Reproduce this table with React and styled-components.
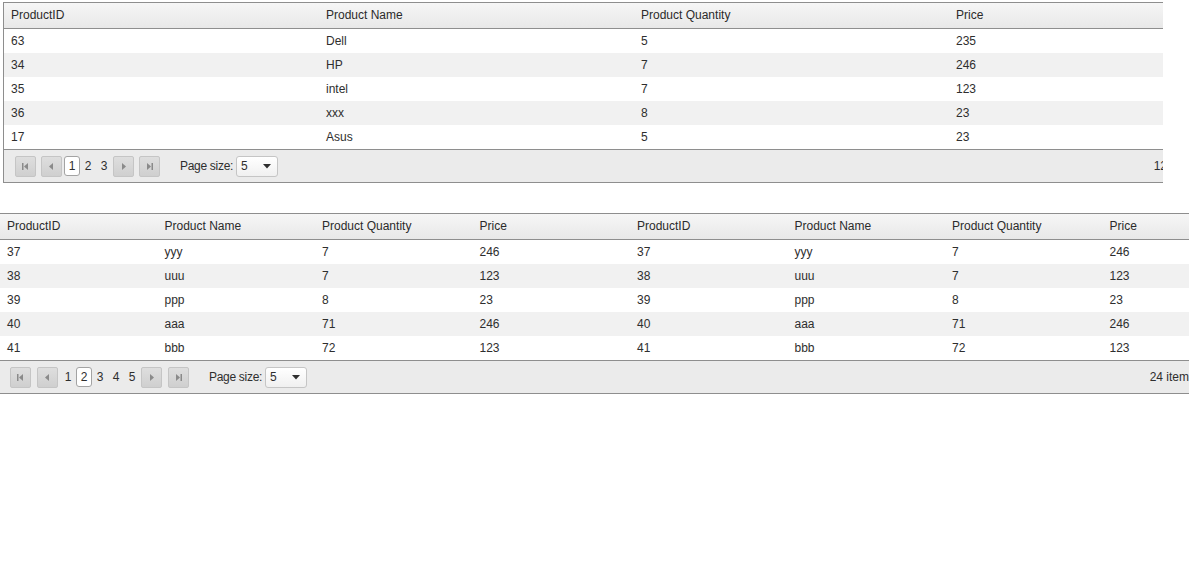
import React from "react";
import styled, { createGlobalStyle } from "styled-components";

const GlobalStyle = createGlobalStyle`
  html, body {
    margin: 0;
    padding: 0;
    background: #fff;
    overflow: hidden;
  }
  body {
    font-family: "Liberation Sans", Arial, sans-serif;
    font-size: 12px;
    color: #2e2e2e;
  }
`;

const firstRows = [
  ["63", "Dell", "5", "235"],
  ["34", "HP", "7", "246"],
  ["35", "intel", "7", "123"],
  ["36", "xxx", "8", "23"],
  ["17", "Asus", "5", "23"],
];

const secondRows = [
  ["37", "yyy", "7", "246"],
  ["38", "uuu", "7", "123"],
  ["39", "ppp", "8", "23"],
  ["40", "aaa", "71", "246"],
  ["41", "bbb", "72", "123"],
];

const columns = ["ProductID", "Product Name", "Product Quantity", "Price"];

const Page = styled.div`
  width: 1189px;
  height: 570px;
  overflow: hidden;
  padding-top: 2px;
  box-sizing: border-box;
`;

const Clip = styled.div`
  width: ${(p) => p.width}px;
  margin-left: ${(p) => p.left}px;
  margin-bottom: ${(p) => p.bottom || 0}px;
  overflow: hidden;
`;

const Grid = styled.div`
  width: ${(p) => p.width}px;
  border: 1px solid #8e8e8e;
  border-right: none;
  overflow: hidden;
  background: #fff;
`;

const Table = styled.div`
  width: 1260px;
  display: grid;
  grid-template-columns: repeat(${(p) => p.cols}, 1fr);
`;

const HeadCell = styled.div`
  height: 25px;
  line-height: 25px;
  padding: 0 7px;
  background: linear-gradient(#f6f6f6, #e8e8e8);
  border-bottom: 1px solid #8e8e8e;
  color: #2b2b2b;
  white-space: nowrap;
`;

const Cell = styled.div`
  height: 24px;
  line-height: 24px;
  padding: 0 7px;
  background: ${(p) => (p.alt ? "#f1f1f1" : "#fff")};
  white-space: nowrap;
`;

const Pager = styled.div`
  height: 32px;
  border-top: 1px solid #8e8e8e;
  background: #ebebeb;
  display: flex;
  align-items: center;
  padding-left: ${(p) => p.pad}px;
  padding-right: 8px;
`;

const NavButton = styled.div`
  width: 19px;
  height: 19px;
  border: 1px solid #c5c5c5;
  border-radius: 2px;
  background: linear-gradient(#dedede, #cfcfcf);
  display: flex;
  align-items: center;
  justify-content: center;
  margin-right: ${(p) => p.gap || 0}px;
`;

const Pages = styled.div`
  display: flex;
  align-items: center;
  margin-right: 1px;
  margin-left: 2px;
`;

const PageNum = styled.div`
  min-width: 16px;
  height: 20px;
  line-height: 20px;
  text-align: center;
  font-size: 12px;
  color: #2e2e2e;
  box-sizing: border-box;
  ${(p) =>
    p.active
      ? `border: 1px solid #a3a3a3; border-radius: 3px; background: #fff; line-height: 18px;`
      : ``}
`;

const SizeLabel = styled.span`
  margin-left: 20px;
  margin-right: 3px;
  letter-spacing: -0.3px;
  color: #2e2e2e;
`;

const Select = styled.div`
  height: 19px;
  width: 30px;
  border: 1px solid #c5c5c5;
  border-radius: 3px;
  background: linear-gradient(#ffffff, #f0f0f0);
  display: flex;
  align-items: center;
  justify-content: space-between;
  padding: 0 6px 0 4px;
`;

const Info = styled.span`
  margin-left: auto;
  color: #2e2e2e;
  white-space: nowrap;
`;

const Arrow = ({ kind }) => {
  const c = "#8a8a8a";
  if (kind === "first")
    return (
      <svg width="9" height="9" viewBox="0 0 9 9">
        <rect x="1" y="1" width="1.5" height="7" fill={c} />
        <path d="M7 1 L3 4.5 L7 8 Z" fill={c} />
      </svg>
    );
  if (kind === "prev")
    return (
      <svg width="9" height="9" viewBox="0 0 9 9">
        <path d="M6 1 L2 4.5 L6 8 Z" fill={c} />
      </svg>
    );
  if (kind === "next")
    return (
      <svg width="9" height="9" viewBox="0 0 9 9">
        <path d="M3 1 L7 4.5 L3 8 Z" fill={c} />
      </svg>
    );
  return (
    <svg width="9" height="9" viewBox="0 0 9 9">
      <path d="M2 1 L6 4.5 L2 8 Z" fill={c} />
      <rect x="6.5" y="1" width="1.5" height="7" fill={c} />
    </svg>
  );
};

const Caret = () => (
  <svg width="8" height="5" viewBox="0 0 8 5">
    <path d="M0 0 L8 0 L4 4.5 Z" fill="#2e2e2e" />
  </svg>
);

const DataGrid = ({ rows, repeat, pages, current, total, width, pad, gap }) => {
  const heads = repeat === 2 ? [...columns, ...columns] : columns;
  return (
    <Grid width={width}>
      <Table cols={heads.length}>
        {heads.map((h, i) => (
          <HeadCell key={"h" + i}>{h}</HeadCell>
        ))}
        {rows.map((r, ri) => {
          const cells = repeat === 2 ? [...r, ...r] : r;
          return cells.map((v, ci) => (
            <Cell key={ri + "-" + ci} alt={ri % 2 === 1}>
              {v}
            </Cell>
          ));
        })}
      </Table>
      <Pager pad={pad}>
        <NavButton gap={gap}>
          <Arrow kind="first" />
        </NavButton>
        <NavButton>
          <Arrow kind="prev" />
        </NavButton>
        <Pages>
          {Array.from({ length: pages }, (_, i) => (
            <PageNum key={i} active={i + 1 === current}>
              {i + 1}
            </PageNum>
          ))}
        </Pages>
        <NavButton gap={gap}>
          <Arrow kind="next" />
        </NavButton>
        <NavButton>
          <Arrow kind="last" />
        </NavButton>
        <SizeLabel>Page size:</SizeLabel>
        <Select>
          <span>5</span>
          <Caret />
        </Select>
        <Info>{total} items</Info>
      </Pager>
    </Grid>
  );
};

const App = () => {
  return (
    <Page>
      <GlobalStyle />
      <Clip width={1160} left={3} bottom={30}>
        <DataGrid
          rows={firstRows}
          repeat={1}
          pages={3}
          current={1}
          total={12}
          width={1203}
          pad={11}
          gap={5}
        />
      </Clip>
      <Clip width={1200} left={-1}>
        <DataGrid
          rows={secondRows}
          repeat={2}
          pages={5}
          current={2}
          total={24}
          width={1203}
          pad={10}
          gap={6}
        />
      </Clip>
    </Page>
  );
};

export default App;
